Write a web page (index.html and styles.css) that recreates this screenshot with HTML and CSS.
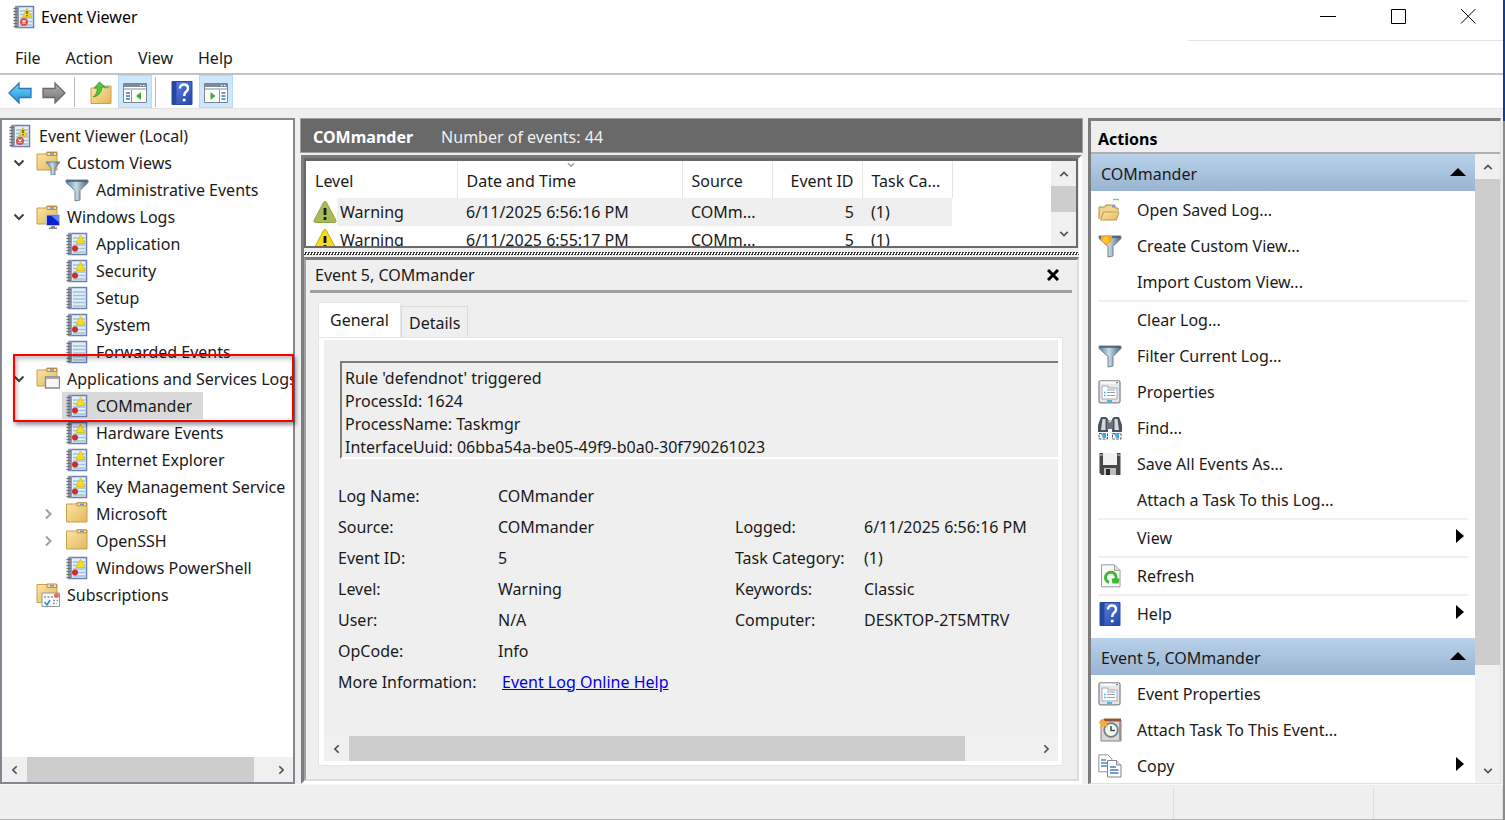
FILE: index.html
```html
<!DOCTYPE html>
<html lang="en">
  <head>
    <meta charset="UTF-8" />
    <meta name="viewport" content="width=device-width, initial-scale=1.0" />
    <title>Event Viewer</title>
    <link rel="stylesheet" href="styles.css">
  </head>
  <body>
    <svg class="sprite" aria-hidden="true">
      <defs>
        <linearGradient id="g-folder" x1="0" y1="0" x2="1" y2="1">
          <stop offset="0" stop-color="#fbe6a6" />
          <stop offset="1" stop-color="#e3b75c" />
        </linearGradient>
        <linearGradient id="g-funnel" x1="0" y1="0" x2="1" y2="0">
          <stop offset="0" stop-color="#5f7f96" />
          <stop offset="0.45" stop-color="#c9dbe6" />
          <stop offset="1" stop-color="#4a6478" />
        </linearGradient>
        <linearGradient id="g-help" x1="0" y1="0" x2="1" y2="1">
          <stop offset="0" stop-color="#5a86e6" />
          <stop offset="1" stop-color="#2446a8" />
        </linearGradient>
        <linearGradient id="g-blue" x1="0" y1="0" x2="0" y2="1">
          <stop offset="0" stop-color="#7fd4fb" />
          <stop offset="1" stop-color="#1593dd" />
        </linearGradient>
        <linearGradient id="g-gray" x1="0" y1="0" x2="0" y2="1">
          <stop offset="0" stop-color="#b0b0b0" />
          <stop offset="1" stop-color="#757575" />
        </linearGradient>
      </defs>

      <symbol id="i-book" viewBox="0 0 24 24">
        <path d="M4 1.500h17.500v21h-17.500z" fill="#e6eff8" stroke="#6c7fb3" stroke-width="1.500" />
        <path d="M4 1h3v22h-3z" fill="#8d99ad" />
        <path d="M8 6h12M8 9.500h12M8 13h12M8 16.500h12M8 20h12" stroke="#9dc3da" stroke-width="1.400" />
        <path d="M1.500 3.500h4M1.500 6.500h4M1.500 9.500h4M1.500 12.500h4M1.500 15.500h4M1.500 18.500h4M1.500 21.500h4" stroke="#6d6d6d" stroke-width="1.500" />
      </symbol>
      <symbol id="i-viewer" viewBox="0 0 24 24">
        <use href="#i-book" />
        <path d="M15 3.500l4.500 8.500h-9z" fill="#f6d91e" stroke="#d6b720" stroke-width="0.800" />
        <path d="M15 6v3M15 10v1.200" stroke="#4a4416" stroke-width="1.300" />
        <circle cx="12" cy="17" r="4" fill="#d9504c" />
        <path d="M10.500 15.500l3 3M13.500 15.500l-3 3" stroke="#fff" stroke-width="1.200" />
      </symbol>
      <symbol id="i-log" viewBox="0 0 24 24">
        <use href="#i-book" />
        <path d="M15.500 3l4.500 8.500h-9z" fill="#f7e01b" stroke="#d9bb10" stroke-width="0.800" />
        <circle cx="10" cy="16.500" r="3" fill="#c9302c" />
      </symbol>
      <symbol id="i-folder" viewBox="0 0 24 24">
        <path d="M1.500 2h9l1-1h10.500v19h-20.500z" fill="url(#g-folder)" stroke="#c9a04c" />
        <path d="M12 0.800h9.500v3h-9.500z" fill="#f4dfa8" stroke="#b98f3f" />
        <path d="M15 2.300h4" stroke="#5b9bd5" stroke-width="1.500" />
      </symbol>
      <symbol id="i-custom" viewBox="0 0 24 24">
        <path d="M1 3h9l1-2h10v18h-20z" fill="url(#g-folder)" stroke="#c9a04c" />
        <path d="M11 1.500h9.500v3h-9.500z" fill="#f4dfa8" stroke="#b98f3f" />
        <path d="M14 3h4" stroke="#5b9bd5" stroke-width="1.500" />
        <path d="M10 11h14l-5 6v7h-4v-7z" fill="url(#g-funnel)" stroke="#5b7386" stroke-width="0.800" />
      </symbol>
      <symbol id="i-winlogs" viewBox="0 0 24 24">
        <path d="M1 3h9l1-2h10v18h-20z" fill="url(#g-folder)" stroke="#c9a04c" />
        <path d="M11 1.500h9.500v3h-9.500z" fill="#f4dfa8" stroke="#b98f3f" />
        <path d="M14 3h4" stroke="#5b9bd5" stroke-width="1.500" />
        <path d="M10.500 10h13v10.500h-13z" fill="#0a1fd0" stroke="#b9c4d8" />
        <path d="M15 10.500h8v7z" fill="#5f87f2" />
        <path d="M15 21h4v1.500h2v1.500h-8v-1.500h2z" fill="#8a8a8a" />
      </symbol>
      <symbol id="i-applogs" viewBox="0 0 24 24">
        <path d="M1 3h9l1-2h10v18h-20z" fill="url(#g-folder)" stroke="#c9a04c" />
        <path d="M11 1.500h9.500v3h-9.500z" fill="#f4dfa8" stroke="#b98f3f" />
        <path d="M14 3h4" stroke="#5b9bd5" stroke-width="1.500" />
        <path d="M9.500 10h14v11h-14z" fill="#f6f6f6" stroke="#85888f" stroke-width="1.300" />
        <path d="M10 11.200h13" stroke="#9fa6b5" stroke-width="1.500" />
      </symbol>
      <symbol id="i-subs" viewBox="0 0 24 24">
        <path d="M1 1.500h20v18h-20z" fill="url(#g-folder)" stroke="#c9a04c" />
        <path d="M11 1h9.500v3.500h-9.500z" fill="#f4dfa8" stroke="#b98f3f" />
        <path d="M14 2.700h4" stroke="#5b9bd5" stroke-width="1.500" />
        <path d="M6 10h17.500v13.500h-17.500z" fill="#fbfbfb" stroke="#969696" />
        <circle cx="20.500" cy="12.500" r="2.500" fill="#f46a5e" />
        <path d="M8 14h9M17 17.500h5M17 20.500h4" stroke="#7c9bb8" stroke-width="1.500" stroke-dasharray="2 1.500" />
        <path d="M8.500 19l2.500 3l3-5" fill="none" stroke="#2c8ccb" stroke-width="1.500" />
      </symbol>
      <symbol id="i-funnel" viewBox="0 0 24 24">
        <path d="M1 2h22v2.500l-8 8v9.500l-5 1v-10.500l-9-8z" fill="url(#g-funnel)" stroke="#6b8496" />
        <path d="M2 3h20" stroke="#3f6076" stroke-width="1.500" />
      </symbol>
      <symbol id="i-newfunnel" viewBox="0 0 24 24">
        <use href="#i-funnel" />
        <path d="M3 2h11l-1 6l-4 3l-6-4z" fill="#fba818" />
        <circle cx="8" cy="6" r="3" fill="#ffc83a" />
      </symbol>
      <symbol id="i-help" viewBox="0 0 24 24">
        <path d="M2 0.500h20v23h-20z" fill="url(#g-help)" stroke="#2b4aa8" />
        <path d="M2 1h4.500v22.500h-4.500z" fill="#2646a3" />
        <path d="M10 7.500q0-4 4-4t4 3.700q0 2.300-2.200 3.800q-1.600 1.200-1.600 4" fill="none" stroke="#fff" stroke-width="2.400" />
        <circle cx="14.200" cy="19" r="1.600" fill="#fff" />
      </symbol>
      <symbol id="i-back" viewBox="0 0 24 24">
        <path d="M1 12l10-10v5.500h12v9h-12v5.500z" fill="url(#g-blue)" stroke="#2b78b5" stroke-width="1.300" />
      </symbol>
      <symbol id="i-forward" viewBox="0 0 24 24">
        <path d="M23 12l-10-10v5.500h-12v9h12v5.500z" fill="url(#g-gray)" stroke="#696969" stroke-width="1.300" />
      </symbol>
      <symbol id="i-up" viewBox="0 0 24 24">
        <path d="M2 7h10l1-2h9v17.500h-20z" fill="url(#g-folder)" stroke="#c9a04c" />
        <path d="M15 6.500h5" stroke="#5b9bd5" stroke-width="1.500" />
        <path d="M4 16q4-2 4.500-9h-3.500l5.500-6l5.500 5h-3q-1 9-9 10z" fill="#4fc63b" stroke="#2c9a22" stroke-width="0.800" />
      </symbol>
      <symbol id="i-treepane" viewBox="0 0 24 24">
        <path d="M0.500 3.500h23v19h-23z" fill="#fff" stroke="#7d848c" />
        <path d="M1 4h22v3h-22z" fill="#7f8b99" />
        <path d="M1 9h22" stroke="#a9b2bc" stroke-width="1.500" />
        <path d="M17 5.500h1.500M20 5.500h1.500" stroke="#fff" />
        <path d="M8.500 10v12" stroke="#8b949e" />
        <path d="M3 13h4M3 16h4M3 19h4" stroke="#3a78b5" stroke-width="1.500" />
        <path d="M18 12v8l-5-4z" fill="#3fae2a" />
      </symbol>
      <symbol id="i-actionpane" viewBox="0 0 24 24">
        <path d="M0.500 3.500h23v19h-23z" fill="#fff" stroke="#7d848c" />
        <path d="M1 4h22v3h-22z" fill="#7f8b99" />
        <path d="M1 9h22" stroke="#a9b2bc" stroke-width="1.500" />
        <path d="M17 5.500h1.500M20 5.500h1.500" stroke="#fff" />
        <path d="M15.500 10v12" stroke="#8b949e" />
        <path d="M17.500 13h4M17.500 16h4M17.500 19h4" stroke="#3a78b5" stroke-width="1.500" />
        <path d="M6.500 12v8l5-4z" fill="#3fae2a" />
      </symbol>
      <symbol id="i-warn" viewBox="0 0 24 24">
        <path d="M12 1.500q1 0 1.500 1l9.500 18q0.500 2-1.500 2h-19q-2 0-1.500-2l9.500-18q0.500-1 1.500-1z" fill="#f3dc1f" stroke="#c9a90c" />
        <path d="M12 8v7M12 17v3" stroke="#111" stroke-width="2.800" />
      </symbol>
      <symbol id="i-warnsel" viewBox="0 0 24 24">
        <path d="M12 1.500q1 0 1.500 1l9.500 18q0.500 2-1.500 2h-19q-2 0-1.500-2l9.500-18q0.500-1 1.500-1z" fill="#a9bb55" stroke="#8f9f45" />
        <path d="M12 8v7M12 17v3" stroke="#0a2433" stroke-width="2.800" />
      </symbol>
      <symbol id="i-open" viewBox="0 0 24 24">
        <path d="M15 1.500h6" stroke="#6fdc61" stroke-width="1.500" />
        <path d="M1 21v-12h6l1-2h9v3h3v3" fill="#f0d48b" stroke="#b98f3f" />
        <path d="M14 8.500h3" stroke="#5b9bd5" stroke-width="1.500" />
        <path d="M2.500 22l3-8h15.500l-2.500 8z" fill="url(#g-folder)" stroke="#c29a48" />
      </symbol>
      <symbol id="i-props" viewBox="0 0 24 24">
        <rect x="1" y="0.800" width="21" height="22" rx="1.500" fill="#e5e7ea" stroke="#82878d" stroke-width="1.300" />
        <path d="M2 2.500h19" stroke="#fff" stroke-width="2" />
        <path d="M18 2.500h2" stroke="#7d8690" stroke-width="1.500" />
        <path d="M4 8v-2h6v2h9v11h-15z" fill="#fff" stroke="#a4abb3" />
        <path d="M6 12.500h1.500M6 15.500h1.500" stroke="#2fb0e8" stroke-width="1.500" />
        <path d="M9 10h8M9 12.500h8M9 15.500h8" stroke="#9aa3ad" stroke-width="1.200" />
        <path d="M9 21h5" stroke="#28bdf0" stroke-width="1.800" />
      </symbol>
      <symbol id="i-find" viewBox="0 0 24 24">
        <path d="M3 1h5l2 2v13h-10v-7zM21 1h-5l-2 2v13h10v-7z" fill="#4b535e" />
        <path d="M9 4h6v9h-6z" fill="#6a727d" />
        <path d="M4.500 3h3v11h-4.500zM16.500 3h3l1.500 11h-4.500z" fill="#d6dade" />
        <circle cx="12" cy="5" r="1.500" fill="#c9cdd2" />
        <path d="M1 17.500h8.500v5.500h-8.500zM14.500 17.500h8.500v5.500h-8.500z" fill="#fff" stroke="#555c66" stroke-dasharray="3 1" />
        <path d="M3 18l5-1v5h-3zM16 18l5-1v5h-3z" fill="#3eaef0" />
      </symbol>
      <symbol id="i-save" viewBox="0 0 24 24">
        <path d="M1.500 1h21v22h-19l-2-2z" fill="#474747" />
        <path d="M5 1h14v12h-14z" fill="#f2f2f2" />
        <path d="M1.500 3h3M19.500 3h3" stroke="#ddd" />
        <path d="M6 16h12v7h-12z" fill="#bdbdbd" />
        <path d="M8 17h4v6h-4z" fill="#2b2b2b" />
      </symbol>
      <symbol id="i-refresh" viewBox="0 0 24 24">
        <path d="M3.500 0.800h13l5.500 5.500v16.500h-18.500z" fill="#fafafa" stroke="#9a9a9a" />
        <path d="M16.500 1v5.300h5.300" fill="#e2e2e2" stroke="#9a9a9a" />
        <path d="M11 18.500a5.300 5.300 0 1 1 6.500-2.500" fill="none" stroke="#3fb833" stroke-width="3" />
        <path d="M13.500 14.500l8 0l-1 5l-6 0z" fill="#3fb833" />
      </symbol>
      <symbol id="i-task" viewBox="0 0 24 24">
        <path d="M3 2h20v21h-20z" fill="#dcd9d5" stroke="#8b8480" />
        <path d="M6 2h17" stroke="#9c4c37" stroke-width="3" />
        <path d="M22 3v19" stroke="#8b8480" stroke-width="1.500" />
        <circle cx="13" cy="12" r="6.800" fill="#f4f8f2" stroke="#6f8291" stroke-width="1.800" />
        <path d="M13 8v4.500h4" fill="none" stroke="#3b4f5e" stroke-width="1.500" />
        <path d="M5.500 0l1.500 3.500l4-0.500l-2.500 3l1.500 3.500l-4-1.500l-3.500 2.500l0.500-4l-3-2.500l4-0.500z" fill="#f9ae2f" />
      </symbol>
      <symbol id="i-copy" viewBox="0 0 24 24">
        <path d="M0.800 0.800h9l4 4v13h-13z" fill="#fff" stroke="#8f949a" />
        <path d="M3 6h5M3 9h6M3 12h6" stroke="#4d86c6" stroke-width="1.300" />
        <path d="M9.500 6.500h9l4.500 4.500v12h-13.500z" fill="#fff" stroke="#7f858c" />
        <path d="M18.500 6.500v4.500h4.500" fill="#e5e8eb" stroke="#7f858c" />
        <path d="M12 13h6M12 16h8.500M12 19h8.500" stroke="#3f7cc4" stroke-width="1.400" />
      </symbol>
      <symbol id="i-down" viewBox="0 0 12 12">
        <path d="M1.500 3.500l4.500 4.500l4.500-4.500" fill="none" stroke="currentColor" stroke-width="2" />
      </symbol>
      <symbol id="i-upc" viewBox="0 0 12 12">
        <path d="M1.500 8.500l4.500-4.500l4.500 4.500" fill="none" stroke="currentColor" stroke-width="2" />
      </symbol>
      <symbol id="i-right" viewBox="0 0 12 12">
        <path d="M4 1.500l4.500 4.500l-4.500 4.500" fill="none" stroke="currentColor" stroke-width="2" />
      </symbol>
      <symbol id="i-left" viewBox="0 0 12 12">
        <path d="M8 1.500l-4.500 4.500l4.500 4.500" fill="none" stroke="currentColor" stroke-width="2" />
      </symbol>
    </svg>

    <header class="titlebar">
      <svg class="icon"><use href="#i-viewer" /></svg>
      <h1>Event Viewer</h1>
      <div class="window-controls">
        <button type="button" aria-label="Minimize">
          <svg viewBox="0 0 16 16"><path d="M0 8.500h16" /></svg>
        </button>
        <button type="button" aria-label="Maximize">
          <svg viewBox="0 0 16 16"><path d="M1.500 1.500h14v14h-14z" /></svg>
        </button>
        <button type="button" aria-label="Close">
          <svg viewBox="0 0 16 16"><path d="M1 1l14.500 14.500M15.500 1l-14.500 14.500" /></svg>
        </button>
      </div>
    </header>

    <nav class="menubar">
      <button type="button">File</button>
      <button type="button">Action</button>
      <button type="button">View</button>
      <button type="button">Help</button>
    </nav>

    <div class="toolbar" role="toolbar" aria-label="Standard">
      <button type="button" aria-label="Back"><svg class="icon"><use href="#i-back" /></svg></button>
      <button type="button" aria-label="Forward"><svg class="icon"><use href="#i-forward" /></svg></button>
      <span class="separator"></span>
      <button type="button" aria-label="Up one level"><svg class="icon"><use href="#i-up" /></svg></button>
      <button type="button" class="pressed" aria-label="Show console tree"><svg class="icon"><use href="#i-treepane" /></svg></button>
      <span class="separator"></span>
      <button type="button" aria-label="Help"><svg class="icon"><use href="#i-help" /></svg></button>
      <button type="button" class="pressed" aria-label="Show action pane"><svg class="icon"><use href="#i-actionpane" /></svg></button>
    </div>

    <main class="workspace">
      <section class="tree-pane">
        <ul class="tree">
          <li class="node root"><svg class="icon"><use href="#i-viewer" /></svg><span>Event Viewer (Local)</span></li>
          <li class="node">
            <button type="button" class="toggle" aria-label="Collapse Custom Views"><svg><use href="#i-down" /></svg></button>
            <svg class="icon"><use href="#i-custom" /></svg><span>Custom Views</span>
          </li>
          <li class="node child"><svg class="icon"><use href="#i-funnel" /></svg><span>Administrative Events</span></li>
          <li class="node">
            <button type="button" class="toggle" aria-label="Collapse Windows Logs"><svg><use href="#i-down" /></svg></button>
            <svg class="icon"><use href="#i-winlogs" /></svg><span>Windows Logs</span>
          </li>
          <li class="node child"><svg class="icon"><use href="#i-log" /></svg><span>Application</span></li>
          <li class="node child"><svg class="icon"><use href="#i-log" /></svg><span>Security</span></li>
          <li class="node child"><svg class="icon"><use href="#i-book" /></svg><span>Setup</span></li>
          <li class="node child"><svg class="icon"><use href="#i-log" /></svg><span>System</span></li>
          <li class="node child"><svg class="icon"><use href="#i-book" /></svg><span>Forwarded Events</span></li>
          <li class="node">
            <button type="button" class="toggle" aria-label="Collapse Applications and Services Logs"><svg><use href="#i-down" /></svg></button>
            <svg class="icon"><use href="#i-applogs" /></svg><span>Applications and Services Logs</span>
          </li>
          <li class="node child selected"><svg class="icon"><use href="#i-log" /></svg><span>COMmander</span></li>
          <li class="node child"><svg class="icon"><use href="#i-log" /></svg><span>Hardware Events</span></li>
          <li class="node child"><svg class="icon"><use href="#i-log" /></svg><span>Internet Explorer</span></li>
          <li class="node child"><svg class="icon"><use href="#i-log" /></svg><span>Key Management Service</span></li>
          <li class="node child expandable">
            <button type="button" class="toggle closed" aria-label="Expand Microsoft"><svg><use href="#i-right" /></svg></button>
            <svg class="icon"><use href="#i-folder" /></svg><span>Microsoft</span>
          </li>
          <li class="node child expandable">
            <button type="button" class="toggle closed" aria-label="Expand OpenSSH"><svg><use href="#i-right" /></svg></button>
            <svg class="icon"><use href="#i-folder" /></svg><span>OpenSSH</span>
          </li>
          <li class="node child"><svg class="icon"><use href="#i-log" /></svg><span>Windows PowerShell</span></li>
          <li class="node leaf"><svg class="icon"><use href="#i-subs" /></svg><span>Subscriptions</span></li>
        </ul>
        <div class="scrollbar horizontal">
          <button type="button" aria-label="Scroll left"><svg><use href="#i-left" /></svg></button>
          <div class="track"><div class="thumb tree-thumb"></div></div>
          <button type="button" aria-label="Scroll right"><svg><use href="#i-right" /></svg></button>
        </div>
        <div class="highlight"></div>
      </section>

      <section class="center-pane">
        <div class="pane-header">
          <h2>COMmander</h2>
          <span>Number of events: 44</span>
        </div>
        <div class="results">
          <div class="event-list">
            <div class="table-wrap">
              <table>
                <thead>
                  <tr>
                    <th class="col-level">Level</th>
                    <th class="col-date">Date and Time<svg class="sort"><use href="#i-down" /></svg></th>
                    <th class="col-small">Source</th>
                    <th class="col-small number">Event ID</th>
                    <th class="col-small">Task Ca...</th>
                  </tr>
                </thead>
                <tbody>
                  <tr class="active">
                    <td class="level"><svg class="icon"><use href="#i-warnsel" /></svg>Warning</td>
                    <td>6/11/2025 6:56:16 PM</td>
                    <td>COMm...</td>
                    <td class="number">5</td>
                    <td>(1)</td>
                  </tr>
                  <tr>
                    <td class="level"><svg class="icon"><use href="#i-warn" /></svg>Warning</td>
                    <td>6/11/2025 6:55:17 PM</td>
                    <td>COMm...</td>
                    <td class="number">5</td>
                    <td>(1)</td>
                  </tr>
                </tbody>
              </table>
            </div>
            <div class="scrollbar vertical">
              <button type="button" aria-label="Scroll up"><svg><use href="#i-upc" /></svg></button>
              <div class="track"><div class="thumb list-thumb"></div></div>
              <button type="button" aria-label="Scroll down"><svg><use href="#i-down" /></svg></button>
            </div>
          </div>
          <div class="splitter"></div>
          <div class="preview">
            <div class="preview-header">
              <h3>Event 5, COMmander</h3>
              <button type="button" class="close" aria-label="Close preview">
                <svg viewBox="0 0 12 12"><path d="M1 1l10 10M11 1l-10 10" /></svg>
              </button>
            </div>
            <div class="tabs" role="tablist">
              <button type="button" role="tab" aria-selected="true" class="tab current">General</button>
              <button type="button" role="tab" aria-selected="false" class="tab">Details</button>
            </div>
            <div class="tab-page">
              <textarea class="message" aria-label="Event message" readonly wrap="off">Rule 'defendnot' triggered
ProcessId: 1624
ProcessName: Taskmgr
InterfaceUuid: 06bba54a-be05-49f9-b0a0-30f790261023</textarea>
              <dl class="fields">
                <dt>Log Name:</dt><dd>COMmander</dd>
                <dt>Source:</dt><dd>COMmander</dd>
                <dt class="second">Logged:</dt><dd>6/11/2025 6:56:16 PM</dd>
                <dt>Event ID:</dt><dd>5</dd>
                <dt class="second">Task Category:</dt><dd>(1)</dd>
                <dt>Level:</dt><dd>Warning</dd>
                <dt class="second">Keywords:</dt><dd>Classic</dd>
                <dt>User:</dt><dd>N/A</dd>
                <dt class="second">Computer:</dt><dd>DESKTOP-2T5MTRV</dd>
                <dt>OpCode:</dt><dd>Info</dd>
                <dt>More Information:</dt><dd class="more"><a href="#">Event Log Online Help</a></dd>
              </dl>
              <div class="scrollbar horizontal">
                <button type="button" aria-label="Scroll left"><svg><use href="#i-left" /></svg></button>
                <div class="track"><div class="thumb page-thumb"></div></div>
                <button type="button" aria-label="Scroll right"><svg><use href="#i-right" /></svg></button>
              </div>
            </div>
          </div>
        </div>
      </section>

      <aside class="actions-pane">
        <h2>Actions</h2>
        <div class="actions-body">
          <div class="actions-list">
            <button type="button" class="group">COMmander<span class="collapse"></span></button>
            <ul>
              <li><button type="button"><svg class="icon"><use href="#i-open" /></svg>Open Saved Log...</button></li>
              <li><button type="button"><svg class="icon"><use href="#i-newfunnel" /></svg>Create Custom View...</button></li>
              <li><button type="button"><span class="icon"></span>Import Custom View...</button></li>
              <li class="divided"><button type="button"><span class="icon"></span>Clear Log...</button></li>
              <li><button type="button"><svg class="icon"><use href="#i-funnel" /></svg>Filter Current Log...</button></li>
              <li><button type="button"><svg class="icon"><use href="#i-props" /></svg>Properties</button></li>
              <li><button type="button"><svg class="icon"><use href="#i-find" /></svg>Find...</button></li>
              <li><button type="button"><svg class="icon"><use href="#i-save" /></svg>Save All Events As...</button></li>
              <li><button type="button"><span class="icon"></span>Attach a Task To this Log...</button></li>
              <li class="divided"><button type="button"><span class="icon"></span>View<span class="more-arrow"></span></button></li>
              <li class="divided"><button type="button"><svg class="icon"><use href="#i-refresh" /></svg>Refresh</button></li>
              <li class="divided"><button type="button"><svg class="icon"><use href="#i-help" /></svg>Help<span class="more-arrow"></span></button></li>
            </ul>
            <button type="button" class="group">Event 5, COMmander<span class="collapse"></span></button>
            <ul>
              <li><button type="button"><svg class="icon"><use href="#i-props" /></svg>Event Properties</button></li>
              <li><button type="button"><svg class="icon"><use href="#i-task" /></svg>Attach Task To This Event...</button></li>
              <li><button type="button"><svg class="icon"><use href="#i-copy" /></svg>Copy<span class="more-arrow"></span></button></li>
            </ul>
          </div>
          <div class="scrollbar vertical">
            <button type="button" aria-label="Scroll up"><svg><use href="#i-upc" /></svg></button>
            <div class="track"><div class="thumb actions-thumb"></div></div>
            <button type="button" aria-label="Scroll down"><svg><use href="#i-down" /></svg></button>
          </div>
        </div>
      </aside>
    </main>

    <footer class="statusbar">
      <span></span>
      <span></span>
      <span></span>
    </footer>
  </body>
</html>
```
FILE: styles.css
```css
:root {
  --face: #efefef;
  --dark: #696969;
  --shadow: #a0a0a0;
  --thumb: #cdcdcd;
  --line: #dcdcdc;
  --text: #1a1a1a;
}

* {
  box-sizing: border-box;
}

body {
  display: flex;
  flex-direction: column;
  height: 100vh;
  margin: 0;
  padding-right: 2px;
  overflow: hidden;
  background: linear-gradient(#0b3f8f 121px, #8a8a8a 121px);
  color: var(--text);
  font-family: "Noto Sans", "Open Sans", sans-serif;
  font-size: 16px;
  line-height: 24px;
}

button {
  margin: 0;
  padding: 0;
  border: 0;
  background: none;
  color: inherit;
  font: inherit;
  text-align: left;
}

h1,
h2,
h3,
ul,
dl,
dd {
  margin: 0;
  padding: 0;
  font-size: 16px;
  font-weight: 400;
  list-style: none;
}

.sprite {
  position: absolute;
  width: 0;
  height: 0;
}

.icon {
  flex: none;
  width: 24px;
  height: 24px;
}

/* Window chrome */
.titlebar {
  display: flex;
  align-items: center;
  height: 41px;
  padding: 0 0 7px 12px;
  background: #fff;
}

.titlebar h1 {
  margin-left: 5px;
  color: #000;
}

.window-controls {
  display: flex;
  align-self: flex-start;
  margin-left: auto;
  height: 41px;
  padding-bottom: 8px;
  border-bottom: 1px solid #e5e5e5;
}

.window-controls button {
  display: flex;
  align-items: center;
  justify-content: center;
  width: 70px;
}

.window-controls button:first-child {
  margin-left: 105px;
}

.window-controls svg {
  width: 16px;
  height: 16px;
  fill: none;
  stroke: #000;
}

.menubar {
  display: flex;
  gap: 25px;
  align-items: center;
  height: 34px;
  padding: 2px 0 0 15px;
  border-bottom: 2px solid #c4c4c4;
  background: #fff;
}

.toolbar {
  display: flex;
  align-items: center;
  height: 34px;
  padding-left: 3px;
  border-bottom: 1px solid #e5e5e5;
  background: #fff;
}

.toolbar button {
  display: flex;
  align-items: center;
  justify-content: center;
  width: 34px;
  height: 33px;
  padding-top: 2px;
}

.toolbar .pressed {
  padding-top: 0;
  border: 1px solid #b5dbfa;
  background: #cce8ff;
}

.separator {
  width: 1px;
  height: 30px;
  margin: 0 9px 0 3px;
  background: #b8b8b8;
}

.workspace {
  display: grid;
  flex: 1;
  grid-template-rows: minmax(0, 1fr);
  grid-template-columns: 295px 1fr 415px;
  gap: 5px;
  min-height: 0;
  padding-top: 9px;
  background: var(--face);
}

/* Scroll bars */
.scrollbar {
  display: flex;
  flex: none;
  background: #f0f0f0;
  color: #505050;
}

.scrollbar button {
  display: flex;
  flex: none;
  align-items: center;
  justify-content: center;
  width: 25px;
  height: 25px;
}

.scrollbar svg {
  width: 10px;
  height: 10px;
}

.scrollbar.vertical {
  flex-direction: column;
  width: 25px;
}

.track {
  flex: 1;
  min-width: 0;
  min-height: 0;
}

.thumb {
  width: 100%;
  height: 100%;
  background: var(--thumb);
}

.tree-thumb {
  width: 94%;
}

.page-thumb {
  width: 90%;
}

.list-thumb {
  height: 74%;
}

.actions-thumb {
  height: 84%;
}

/* Console tree */
.tree-pane {
  position: relative;
  display: flex;
  flex-direction: column;
  min-width: 0;
  border: 2px solid #828790;
  background: #fff;
}

.tree {
  flex: 1;
  min-height: 0;
  padding-top: 2px;
  overflow: hidden;
}

.node {
  display: flex;
  align-items: center;
  height: 27px;
  padding-left: 10px;
  white-space: nowrap;
}

.node span {
  margin-left: 7px;
}

.node.root {
  padding-left: 6px;
}

.node.child {
  padding-left: 63px;
}

.node.leaf {
  padding-left: 34px;
}

.node.child.expandable {
  padding-left: 39px;
}

.toggle {
  display: flex;
  flex: none;
  align-items: center;
  width: 24px;
  color: #404040;
}

.toggle svg {
  width: 14px;
  height: 12px;
}

.toggle.closed {
  color: #a0a0a0;
}

.node.selected {
  width: 201px;
  background: linear-gradient(to right, #fff 60px, #d9d9d9 60px);
}

.highlight {
  position: absolute;
  top: 234px;
  left: 11px;
  right: -1px;
  height: 68px;
  border: 2px solid #f00;
  box-shadow: 2px 3px 4px rgba(0, 0, 0, 0.4), inset 2px 3px 4px rgba(0, 0, 0, 0.25);
}

/* Event list */
.center-pane {
  display: flex;
  flex-direction: column;
  min-width: 0;
}

.pane-header {
  display: flex;
  gap: 28px;
  align-items: center;
  height: 35px;
  padding: 3px 0 0 12px;
  border: 1px solid var(--shadow);
  background: var(--dark);
  color: #f0f0f0;
}

.pane-header h2 {
  color: #fff;
  font-weight: 700;
}

.results {
  display: flex;
  flex: 1;
  flex-direction: column;
  min-height: 0;
  margin: 2px 1px 0;
  border: 3px solid #fff;
  border-top-color: #7c7c7c;
  border-left-color: #7c7c7c;
}

.event-list {
  display: flex;
  flex: none;
  height: 90px;
  margin-right: 1px;
  border: 2px solid var(--dark);
  border-top-width: 3px;
  background: #fff;
}

.table-wrap {
  flex: 1;
  min-width: 0;
  overflow: hidden;
}

table {
  border-collapse: collapse;
  table-layout: fixed;
  width: 646px;
}

th,
td {
  height: 28px;
  padding: 0 9px;
  font-weight: 400;
  text-align: left;
  white-space: nowrap;
}

th {
  position: relative;
  height: 37px;
  padding-top: 3px;
  border-right: 1px solid #e5e5e5;
}

.col-level {
  width: 151px;
}

.col-date {
  width: 225px;
}

.col-small {
  width: 90px;
}

.number {
  padding-right: 8px;
  text-align: right;
}

.sort {
  position: absolute;
  top: 0;
  left: 108px;
  width: 10px;
  height: 8px;
  color: #999;
}

td.level {
  display: flex;
  gap: 3px;
  align-items: center;
  padding-left: 7px;
}

.active {
  background: var(--face);
}

.active .level {
  background: linear-gradient(to right, #fff 31px, var(--face) 31px);
}

.splitter {
  flex: none;
  height: 3px;
  margin: 4px 0 2px;
  background: repeating-conic-gradient(#333 0 25%, #fff 0 50%) 0 0 / 3px 3px;
}

/* Preview */
.preview {
  display: flex;
  flex: 1;
  flex-direction: column;
  min-height: 0;
  padding: 0 5px 13px 4px;
  border: 2px solid var(--line);
  border-top: 3px solid #7c7c7c;
  border-left-color: var(--shadow);
}

.preview-header {
  display: flex;
  flex: none;
  align-items: center;
  justify-content: space-between;
  height: 33px;
  padding: 0 13px 1px 5px;
  border-bottom: 3px solid var(--shadow);
}

.close svg {
  display: block;
  width: 12px;
  height: 12px;
  stroke: #000;
  stroke-width: 3;
}

.tabs {
  display: flex;
  flex: none;
  align-items: flex-end;
  height: 44px;
  padding-left: 8px;
}

.tab {
  height: 31px;
  padding: 2px 7px 0;
  border: 1px solid var(--line);
  border-bottom: 0;
}

.tab.current {
  height: 35px;
  padding: 0 11px;
  border-color: #e5e5e5;
  background: #fff;
}

.tab-page {
  display: flex;
  flex: 1;
  flex-direction: column;
  min-height: 0;
  margin: 0 9px 0 8px;
  padding: 2px 4px 4px 5px;
  border: 1px solid #e5e5e5;
  background: linear-gradient(var(--face), var(--face)) content-box, #fff;
}

.message {
  display: block;
  flex: none;
  height: 98px;
  margin: 21px 0 0 16px;
  padding: 4px 3px 0;
  border: 2px solid #fff;
  border-top-color: #7c7c7c;
  border-left-color: #7c7c7c;
  border-right: 0;
  outline: 0;
  background: var(--face);
  color: inherit;
  font: inherit;
  line-height: 23px;
  overflow: hidden;
  resize: none;
}

.fields {
  display: grid;
  flex: 1;
  grid-template-columns: 160px 237px 129px 1fr;
  grid-auto-rows: 31px;
  align-items: center;
  align-content: start;
  margin: 21px 0 0 14px;
  white-space: nowrap;
}

dt {
  grid-column: 1;
}

dt.second {
  grid-column: 3;
}

.more {
  padding-left: 4px;
}

.more a {
  color: #0000e6;
}

/* Actions */
.actions-pane {
  display: flex;
  flex-direction: column;
  min-width: 0;
  margin-right: 2px;
  border: 1px solid #e0e0e0;
  border-top: 3px solid #7c7c7c;
  border-left: 3px solid #7c7c7c;
}

.actions-pane h2 {
  height: 33px;
  padding: 6px 0 0 7px;
  border-bottom: 2px solid #b0b0b0;
  color: #000;
  font-weight: 700;
}

.actions-body {
  display: flex;
  flex: 1;
  min-height: 0;
  background: #fff;
}

.actions-list {
  flex: 1;
  min-width: 0;
  overflow: hidden;
}

.group {
  display: flex;
  align-items: center;
  justify-content: space-between;
  width: 100%;
  height: 37px;
  padding: 3px 9px 0 10px;
  background: linear-gradient(#b9d1ea, #99b4d1);
}

.collapse {
  margin-bottom: 4px;
  border: 8px solid transparent;
  border-top: 0;
  border-bottom-color: #000;
}

.actions-list ul {
  padding: 1px 7px 6px;
}

.actions-list li button {
  display: flex;
  gap: 15px;
  align-items: center;
  width: 100%;
  height: 36px;
}

.divided {
  border-top: 2px solid #f0f0f0;
}

.more-arrow {
  margin: 0 4px 4px auto;
  border: 7px solid transparent;
  border-right: 0;
  border-left: 8px solid #000;
}

.statusbar {
  display: grid;
  flex: none;
  grid-template-columns: 1fr 200px 129px;
  height: 36px;
  padding-top: 3px;
  border-top: 1px solid #f8f8f8;
  border-bottom: 1px solid #b5b5b5;
  background: var(--face);
}

.statusbar span {
  border-right: 1px solid var(--line);
}
```
